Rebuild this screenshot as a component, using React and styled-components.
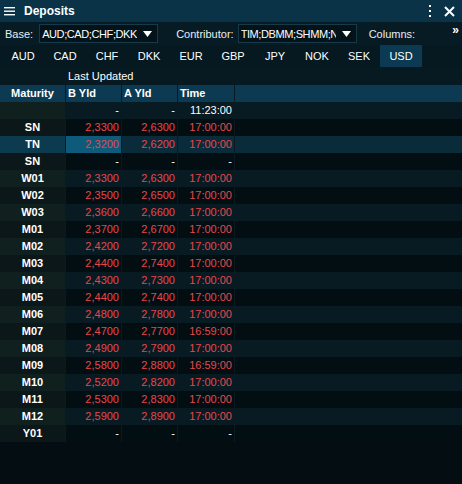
import React from 'react';
import styled, { createGlobalStyle } from 'styled-components';

const Global = createGlobalStyle`
    html, body {
        margin: 0;
        padding: 0;
        background: #030d12;
        font-family: "Liberation Sans", Arial, sans-serif;
        font-size: 11px;
        color: #ffffff;
    }
`

const Panel = styled.div`
    width: 462px;
    height: 484px;
    display: flex;
    flex-direction: column;
    background: #030d12;
    overflow: hidden;
`

const TitleBar = styled.div`
    height: 22px;
    display: flex;
    align-items: center;
    background: #0a3347;
    padding: 0 4px;
    gap: 9px;

    h1 {
        margin: 0;
        font-size: 12px;
        font-weight: bold;
        flex: 1;
    }
`

const TitleIcons = styled.div`
    display: flex;
    align-items: center;
    gap: 12px;
    padding-right: 3px;
`

const Toolbar = styled.div`
    height: 23px;
    display: flex;
    align-items: center;
    background: #071b25;
    padding: 0 5px;
    position: relative;
`

const Label = styled.span`
    margin-right: ${p => p.gap || 4}px;
    color: #e8eef2;
`

const Select = styled.div`
    width: 119px;
    height: 19px;
    box-sizing: border-box;
    border: 1px solid #17394a;
    background: #04131a;
    display: flex;
    align-items: center;
    padding-left: 2px;
    margin-right: ${p => p.after || 0}px;

    span {
        flex: 1;
        overflow: hidden;
        white-space: nowrap;
        letter-spacing: -0.4px;
    }
    svg {
        margin: 0 5px 0 6px;
    }
`

const More = styled.span`
    position: absolute;
    right: 5px;
    top: 1px;
    font-size: 12px;
    font-weight: bold;
    letter-spacing: -2px;
`

const Tabs = styled.div`
    height: 22px;
    display: flex;
    background: #061820;
    padding-left: 2px;
`

const Tab = styled.div`
    width: 42px;
    display: flex;
    align-items: center;
    justify-content: center;
    background: ${p => (p.active ? '#0b3a52' : 'transparent')};
`

const Grid = styled.div`
    display: grid;
    grid-template-columns: 66px 56px 56px 57px 1fr;
`

const Cell = styled.div`
    height: ${p => p.h || 17}px;
    line-height: ${p => p.h || 17}px;
    box-sizing: border-box;
    padding: 0 2px;
    white-space: nowrap;
    text-align: ${p => p.align || 'right'};
    background: ${p => p.bg};
    color: ${p => (p.red ? '#e8474a' : '#ffffff')};
    font-weight: ${p => (p.bold ? 'bold' : 'normal')};
    border-right: ${p => (p.sep ? '1px solid #0a1a22' : 'none')};
`

const rows = [
    ['', '-', '-', '11:23:00', false],
    ['SN', '2,3300', '2,6300', '17:00:00', true],
    ['TN', '2,3200', '2,6200', '17:00:00', true],
    ['SN', '-', '-', '-', false],
    ['W01', '2,3300', '2,6300', '17:00:00', true],
    ['W02', '2,3500', '2,6500', '17:00:00', true],
    ['W03', '2,3600', '2,6600', '17:00:00', true],
    ['M01', '2,3700', '2,6700', '17:00:00', true],
    ['M02', '2,4200', '2,7200', '17:00:00', true],
    ['M03', '2,4400', '2,7400', '17:00:00', true],
    ['M04', '2,4300', '2,7300', '17:00:00', true],
    ['M05', '2,4400', '2,7400', '17:00:00', true],
    ['M06', '2,4800', '2,7800', '17:00:00', true],
    ['M07', '2,4700', '2,7700', '16:59:00', true],
    ['M08', '2,4900', '2,7900', '17:00:00', true],
    ['M09', '2,5800', '2,8800', '16:59:00', true],
    ['M10', '2,5200', '2,8200', '17:00:00', true],
    ['M11', '2,5300', '2,8300', '17:00:00', true],
    ['M12', '2,5900', '2,8900', '17:00:00', true],
    ['Y01', '-', '-', '-', false],
]

const tabs = ['AUD', 'CAD', 'CHF', 'DKK', 'EUR', 'GBP', 'JPY', 'NOK', 'SEK', 'USD']

const Caret = () => (
    <svg width="9" height="6" viewBox="0 0 9 6"><path d="M0 0h9L4.5 6z" fill="#fff" /></svg>
)

export default function App() {
    return (
        <Panel>
            <Global />
            <TitleBar>
                <svg width="11" height="10" viewBox="0 0 11 10">
                    <rect y="1" width="11" height="1.4" fill="#fff" />
                    <rect y="4.5" width="11" height="1.4" fill="#fff" />
                    <rect y="8" width="11" height="1.4" fill="#fff" />
                </svg>
                <h1>Deposits</h1>
                <TitleIcons>
                    <svg width="3" height="12" viewBox="0 0 3 12">
                        <rect y="0" width="2" height="2" fill="#fff" />
                        <rect y="5" width="2" height="2" fill="#fff" />
                        <rect y="10" width="2" height="2" fill="#fff" />
                    </svg>
                    <svg width="11" height="11" viewBox="0 0 11 11">
                        <path d="M1 1l9 9M10 1l-9 9" stroke="#fff" strokeWidth="2" />
                    </svg>
                </TitleIcons>
            </TitleBar>
            <Toolbar>
                <Label gap={6}>Base:</Label>
                <Select after={18}><span>AUD;CAD;CHF;DKK;EUR</span><Caret /></Select>
                <Label gap={4}>Contributor:</Label>
                <Select after={12}><span>TIM;DBMM;SHMM;NDEA</span><Caret /></Select>
                <Label>Columns:</Label>
                <More>»</More>
            </Toolbar>
            <Tabs>
                {tabs.map(t => <Tab key={t} active={t === 'USD'}>{t}</Tab>)}
            </Tabs>
            <Grid>
                <Cell h={18} bg="#071a22" />
                <Cell h={18} bg="#071a22" align="left" style={{ gridColumn: 'span 4' }}>Last Updated</Cell>
                <Cell bg="#0b3a52" bold align="center" sep>Maturity</Cell>
                <Cell bg="#0b3a52" bold align="left" sep>B Yld</Cell>
                <Cell bg="#0b3a52" bold align="left" sep>A Yld</Cell>
                <Cell bg="#0b3a52" bold align="left" sep>Time</Cell>
                <Cell bg="#0b3a52" />
                {rows.map((r, i) => {
                    const odd = i % 2 === 0
                    const sel = i === 2
                    const rowBg = sel ? '#0a2b3a' : odd ? '#081a22' : '#030e13'
                    const matBg = sel ? '#0c3a4e' : odd ? '#0f201f' : '#0b1718'
                    return (
                        <React.Fragment key={i}>
                            <Cell bg={matBg} bold align="center" sep>{r[0]}</Cell>
                            <Cell bg={sel ? '#0e5a7a' : rowBg} red={r[4]} sep>{r[1]}</Cell>
                            <Cell bg={rowBg} red={r[4]} sep>{r[2]}</Cell>
                            <Cell bg={rowBg} red={r[4]} sep>{r[3]}</Cell>
                            <Cell bg={rowBg} />
                        </React.Fragment>
                    )
                })}
            </Grid>
        </Panel>
    )
}
